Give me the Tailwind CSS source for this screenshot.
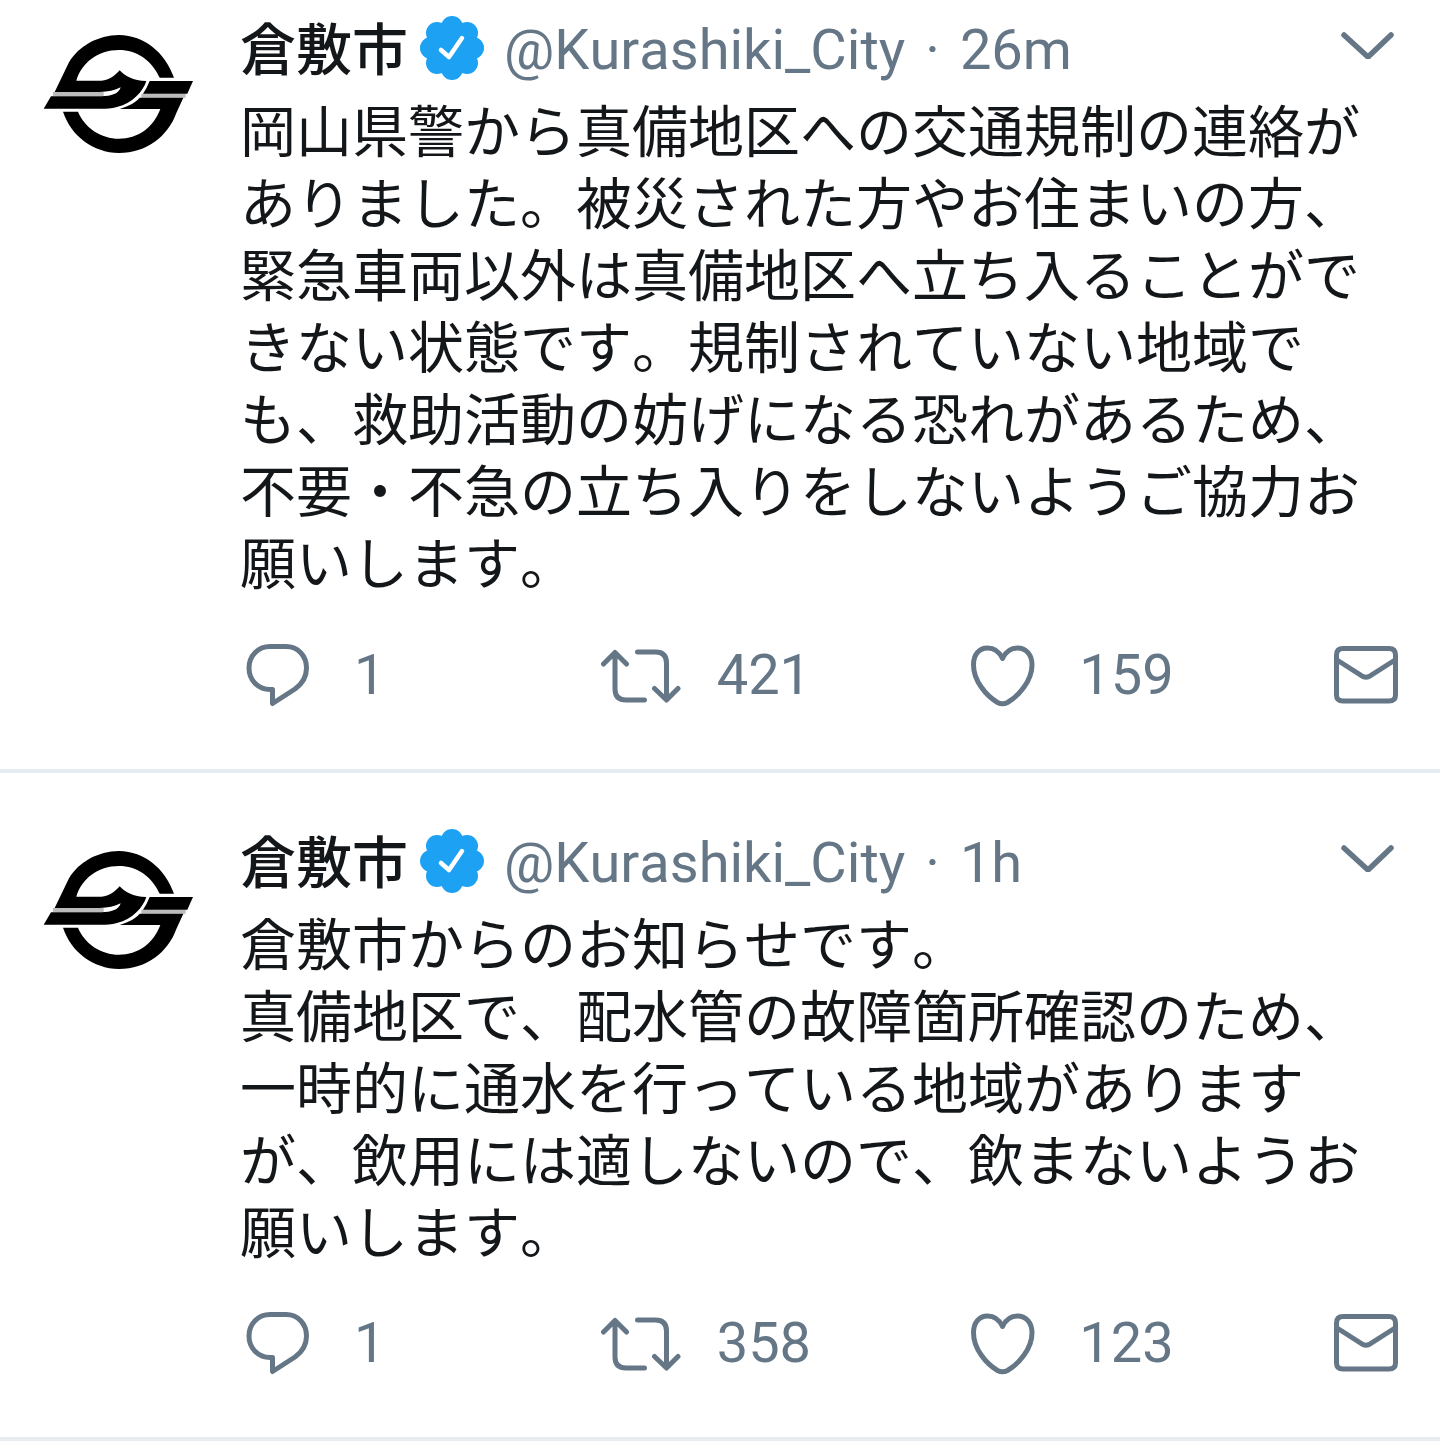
<!DOCTYPE html>
<html lang="ja">
  <head>
    <meta charset="UTF-8" />
    <meta name="viewport" content="width=device-width, initial-scale=1.0" />
    <script src="https://cdn.jsdelivr.net/npm/@tailwindcss/browser@4"></script>
    <title>倉敷市</title>
  </head>
  <body class="bg-white text-[#14171a] font-['Noto_Sans_CJK_JP',sans-serif] [font-kerning:none]">
    <!-- shared icons -->
    <svg class="hidden">
      <symbol id="logo" viewBox="40 40 456 366">
        <path d="M70 223H222M335 228H468" fill="none" stroke="#bbb" stroke-width="12" />
        <path d="M75 217L118 128C148 78 205 47 268 46C345 47 405 98 433 174H390C365 120 320 91 268 91C205 91 155 130 140 183H215C240 181 255 168 270 152C285 168 310 184 350 184C340 215 310 250 262 262C245 267 230 267 215 267H42L64 230H215C245 230 268 222 273 203C255 212 235 217 210 217Z" />
        <path d="M360 184H490L473 222H340Q352 205 360 184Z" />
        <path d="M330 234H461L440 280C415 350 350 400 268 400C190 398 125 350 100 276H145C165 325 215 357 268 357C325 357 370 325 392 268H270C300 258 318 248 330 234Z" />
      </symbol>
      <symbol id="verified" viewBox="-32 -32 64 64">
        <g fill="#1da1f2">
          <circle r="23" />
          <circle cy="-21" r="11" />
          <circle cx="15" cy="-15" r="11" />
          <circle cx="21" r="11" />
          <circle cx="15" cy="15" r="11" />
          <circle cy="21" r="11" />
          <circle cx="-15" cy="15" r="11" />
          <circle cx="-21" r="11" />
          <circle cx="-15" cy="-15" r="11" />
        </g>
        <path d="M-11 2L-3 9L10 -10" fill="none" stroke="#fff" stroke-width="4.5" stroke-linecap="round" stroke-linejoin="round" />
      </symbol>
      <symbol id="chevron" viewBox="0 0 60 36">
        <path d="M6 5L30 27L53 5" fill="none" stroke="currentColor" stroke-width="5.5" stroke-linecap="round" stroke-linejoin="bevel" />
      </symbol>
      <symbol id="reply" viewBox="0 0 64 64">
        <path d="M24 3.500H40C52 3.500 60.500 13 60.500 25C60.500 34 56 41 49 46L26.500 60.500V46.500H24C12 46.500 3 37 3 25C3 13 12 3.500 24 3.500Z" fill="none" stroke="currentColor" stroke-width="5" stroke-linejoin="round" />
      </symbol>
      <symbol id="retweet" viewBox="0 0 80 64">
        <path d="M2.500 21L14 9.500L25.500 21M14 10V46Q14 57 25 57H43.500M36.500 9H54.500Q65.500 9 65.500 20V56M53.500 45.500L65.500 57L77 45.500" fill="none" stroke="currentColor" stroke-width="5" stroke-linecap="round" stroke-linejoin="round" />
      </symbol>
      <symbol id="heart" viewBox="0 0 64 64">
        <path d="M31.500 15.500C28 8 23 5 16.500 5C8.500 5 2.500 11 2.500 22C2.500 38 15.500 53 26.500 59.500Q31.500 62 36.500 59.500C47.500 53 61 38 61 22C61 11 54.500 5 46.500 5C40 5 35 8 31.500 15.500Z" fill="none" stroke="currentColor" stroke-width="5" stroke-linejoin="round" />
      </symbol>
      <symbol id="mail" viewBox="0 0 64 64">
        <path d="M9 5.500H55Q61.500 5.500 61.500 12V52Q61.500 58 55 58H9Q2.500 58 2.500 52V12Q2.500 5.500 9 5.500ZM3 17L29 33.500Q32 35 35 33.500L61 17" fill="none" stroke="currentColor" stroke-width="5" />
      </symbol>
    </svg>

    <main>
      <article class="flex border-b-4 border-[#e6ecf0] pt-3 pb-[62px] pl-[43px] pr-[42px]">
        <a href="#" aria-label="倉敷市" class="w-[197px] shrink-0 pt-[21px]">
          <svg class="w-[152px] h-[122px]"><use href="#logo" /></svg>
        </a>
        <div class="min-w-0 flex-1">
          <header class="flex h-[72px] items-center text-[56px] leading-[72px] text-[#657786]">
            <a href="#" class="pb-1 font-medium text-[#14171a]">倉敷市</a>
            <svg class="ml-3 size-16 shrink-0"><use href="#verified" /></svg>
            <a href="#" class="ml-5 pt-1 font-[Roboto,sans-serif]">@Kurashiki_City</a>
            <span class="ml-5 pt-1 font-[Roboto,sans-serif]">·</span>
            <time class="ml-5 pt-1 font-[Roboto,sans-serif]">26m</time>
            <button class="ml-auto" aria-label="More"><svg class="w-[60px] h-9"><use href="#chevron" /></svg></button>
          </header>
          <p class="mt-2 text-[56px] leading-[72px]">岡山県警から真備地区への交通規制の連絡がありました。被災された方やお住まいの方、緊急車両以外は真備地区へ立ち入ることができない状態です。規制されていない地域でも、救助活動の妨げになる恐れがあるため、不要・不急の立ち入りをしないようご協力お願いします。</p>
          <footer class="mt-[47px] ml-1.5 flex h-16 text-[56px] leading-16 text-[#657786] font-[Roboto,sans-serif]">
            <div class="flex-1"><button class="flex items-center gap-11" aria-label="Reply 1"><svg class="size-16"><use href="#reply" /></svg>1</button></div>
            <div class="flex-1"><button class="-ml-2 flex items-center gap-9" aria-label="Retweet 421"><svg class="w-20 h-16"><use href="#retweet" /></svg>421</button></div>
            <div class="flex-1"><button class="flex items-center gap-11" aria-label="Like 159"><svg class="size-16"><use href="#heart" /></svg>159</button></div>
            <button aria-label="Message"><svg class="size-16"><use href="#mail" /></svg></button>
          </footer>
        </div>
      </article>

      <article class="flex border-b-4 border-[#e6ecf0] pt-[52px] pb-[62px] pl-[43px] pr-[42px]">
        <a href="#" aria-label="倉敷市" class="w-[197px] shrink-0 pt-6">
          <svg class="w-[152px] h-[122px]"><use href="#logo" /></svg>
        </a>
        <div class="min-w-0 flex-1">
          <header class="flex h-[72px] items-center text-[56px] leading-[72px] text-[#657786]">
            <a href="#" class="pb-1 font-medium text-[#14171a]">倉敷市</a>
            <svg class="ml-3 size-16 shrink-0"><use href="#verified" /></svg>
            <a href="#" class="ml-5 pt-1 font-[Roboto,sans-serif]">@Kurashiki_City</a>
            <span class="ml-5 pt-1 font-[Roboto,sans-serif]">·</span>
            <time class="ml-5 pt-1 font-[Roboto,sans-serif]">1h</time>
            <button class="ml-auto" aria-label="More"><svg class="w-[60px] h-9"><use href="#chevron" /></svg></button>
          </header>
          <p class="mt-2 text-[56px] leading-[72px]">倉敷市からのお知らせです。<br />真備地区で、配水管の故障箇所確認のため、一時的に通水を行っている地域がありますが、飲用には適しないので、飲まないようお願いします。</p>
          <footer class="mt-[46px] ml-1.5 flex h-16 text-[56px] leading-16 text-[#657786] font-[Roboto,sans-serif]">
            <div class="flex-1"><button class="flex items-center gap-11" aria-label="Reply 1"><svg class="size-16"><use href="#reply" /></svg>1</button></div>
            <div class="flex-1"><button class="-ml-2 flex items-center gap-9" aria-label="Retweet 358"><svg class="w-20 h-16"><use href="#retweet" /></svg>358</button></div>
            <div class="flex-1"><button class="flex items-center gap-11" aria-label="Like 123"><svg class="size-16"><use href="#heart" /></svg>123</button></div>
            <button aria-label="Message"><svg class="size-16"><use href="#mail" /></svg></button>
          </footer>
        </div>
      </article>
    </main>
  </body>
</html>
